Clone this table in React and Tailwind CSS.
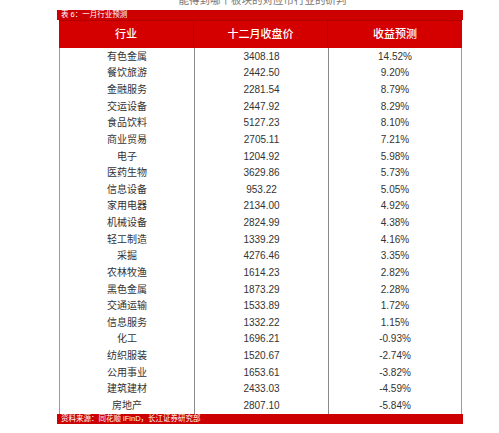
const rows = [
  ["有色金属", "3408.18", "14.52%"],
  ["餐饮旅游", "2442.50", "9.20%"],
  ["金融服务", "2281.54", "8.79%"],
  ["交运设备", "2447.92", "8.29%"],
  ["食品饮料", "5127.23", "8.10%"],
  ["商业贸易", "2705.11", "7.21%"],
  ["电子", "1204.92", "5.98%"],
  ["医药生物", "3629.86", "5.73%"],
  ["信息设备", "953.22", "5.05%"],
  ["家用电器", "2134.00", "4.92%"],
  ["机械设备", "2824.99", "4.38%"],
  ["轻工制造", "1339.29", "4.16%"],
  ["采掘", "4276.46", "3.35%"],
  ["农林牧渔", "1614.23", "2.82%"],
  ["黑色金属", "1873.29", "2.28%"],
  ["交通运输", "1533.89", "1.72%"],
  ["信息服务", "1332.22", "1.15%"],
  ["化工", "1696.21", "-0.93%"],
  ["纺织服装", "1520.67", "-2.74%"],
  ["公用事业", "1653.61", "-3.82%"],
  ["建筑建材", "2433.03", "-4.59%"],
  ["房地产", "2807.10", "-5.84%"],
];

const font = { fontFamily: '"Liberation Sans", "Noto Sans CJK SC", sans-serif' };

export default function App() {
  return (
    <div className="w-[499px] h-[433px] bg-white overflow-hidden" style={font}>
      <div className="h-[10px] overflow-hidden flex justify-center">
        <div className="-mt-[7px] text-[10.5px] leading-[14px] text-[#777] ml-[26px]">
          能得到哪个板块的对应市行业的研判
        </div>
      </div>
      <div className="ml-[57px] w-[406px]">
        <div className="h-[10px] bg-[#cc0000] text-white text-[7.5px] leading-[10px] pl-[4px]">
          表 6：一月行业预测
        </div>
        <div className="ml-[2px] mr-[1px] h-[28px] bg-[#d40000] border-t border-[#b00000] flex text-white text-[11px] font-medium">
          <div className="w-[135px] flex items-center justify-center border-r border-[#b40000]">行业</div>
          <div className="w-[134px] flex items-center justify-center border-r border-[#b40000]">十二月收盘价</div>
          <div className="flex-1 flex items-center justify-center">收益预测</div>
        </div>
        <div className="ml-[2px] mr-[1px] border-l border-r border-[#9a9a9a] text-[10px] text-[#333]">
          {rows.map((r) => (
            <div key={r[0]} className="h-[16.64px] flex items-center">
              <div className="w-[135px] h-full flex items-center justify-center border-r border-[#8a8a8a]">{r[0]}</div>
              <div className="w-[134px] h-full flex items-center justify-center border-r border-[#8a8a8a]">{r[1]}</div>
              <div className="flex-1 h-full flex items-center justify-center">{r[2]}</div>
            </div>
          ))}
        </div>
        <div className="h-[10px] bg-[#cc0000] text-white text-[7.5px] leading-[10px] pl-[4px]">
          资料来源：同花顺 iFinD，长江证券研究部
        </div>
      </div>
    </div>
  );
}
